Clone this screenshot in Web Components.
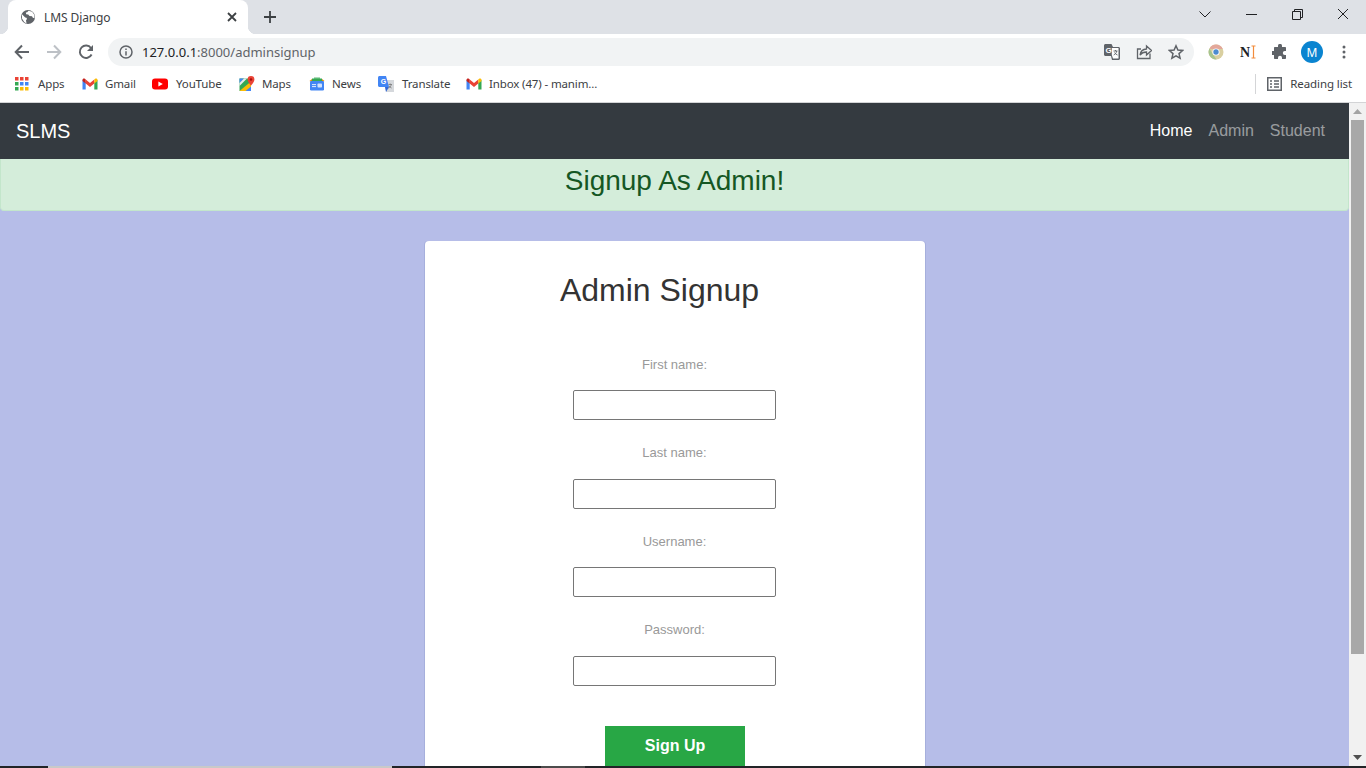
<!DOCTYPE html>
<html lang="en">
<head>
<meta charset="utf-8">
<title>LMS Django</title>
<style>
    html, body { margin: 0; height: 100%; overflow: hidden; background: #fff; }
    body { font-family: "Liberation Sans", Arial, sans-serif; }
    browser-window { height: 768px; }
</style>
</head>
<body>
<browser-window>
    <tab-strip slot="chrome" title-text="LMS Django"></tab-strip>
    <nav-toolbar slot="chrome" url-host="127.0.0.1" url-path=":8000/adminsignup"></nav-toolbar>
    <bookmarks-bar slot="chrome">
        <bookmark-item width="67" label="Apps"><svg width="14" height="14" viewBox="0 0 14 14">
            <rect x="0" y="0" width="3.5" height="3.5" fill="#ea4335"/><rect x="5" y="0" width="3.5" height="3.5" fill="#ea4335"/><rect x="10" y="0" width="3.5" height="3.5" fill="#ea4335"/>
            <rect x="0" y="5" width="3.5" height="3.5" fill="#34a853"/><rect x="5" y="5" width="3.5" height="3.5" fill="#4285f4"/><rect x="10" y="5" width="3.5" height="3.5" fill="#4285f4"/>
            <rect x="0" y="10" width="3.5" height="3.5" fill="#34a853"/><rect x="5" y="10" width="3.5" height="3.5" fill="#fbbc04"/><rect x="10" y="10" width="3.5" height="3.5" fill="#fbbc04"/></svg></bookmark-item>
        <bookmark-item width="70" label="Gmail"><svg width="16" height="16" viewBox="0 0 16 16"><path d="M.5 4v9.500h3.200V6.500z" fill="#4285f4"/><path d="M12.300 6.500v7h3.200V4z" fill="#34a853"/><path d="M3.700 3.500L8 7l4.300-3.500v4L8 11 3.700 7.500z" fill="#ea4335"/><path d="M12.300 3.500l.8-.7c1-.8 2.400-.2 2.400 1.100V5l-3.200 2.500z" fill="#fbbc04"/><path d="M3.700 3.500l-.8-.7C1.900 2 .5 2.600.5 3.900V5l3.200 2.500z" fill="#c5221f"/></svg></bookmark-item>
        <bookmark-item width="87" label="YouTube" text-x="24"><svg width="16" height="16" viewBox="0 0 16 16"><rect x="0" y="2.500" width="16" height="11" rx="3" fill="#f00"/><path d="M6.400 5.400v5.200L10.800 8z" fill="#fff"/></svg></bookmark-item>
        <bookmark-item width="70" label="Maps"><svg width="16" height="16" viewBox="0 0 16 16"><path d="M.5 2.500h11.500v12.500H.5z" fill="#34a853"/><path d="M.5 15L12 5.500V15z" fill="#fbbc04"/><path d="M6.500 15L12 10.500V15z" fill="#4285f4"/><path d="M.5 2.500h4.500L.5 7z" fill="#4285f4"/><path d="M.5 7L5 2.500h3L.5 10z" fill="#e8eaed"/><path d="M12 0a3.400 3.400 0 0 0-3.400 3.400C8.600 5.800 12 9.500 12 9.500s3.400-3.700 3.400-6.100A3.400 3.400 0 0 0 12 0z" fill="#ea4335"/><circle cx="12" cy="3.500" r="1.200" fill="#a50e0e"/></svg></bookmark-item>
        <bookmark-item width="69" label="News"><svg width="16" height="16" viewBox="0 0 16 16"><path d="M3 5V2.500h10V5z" fill="#34a853"/><path d="M5 3V1.500h6V3z" fill="#5bb974"/><path d="M.5 5l2.500-2v3zM15.500 5L13 3v3z" fill="#ea8600"/><rect x="1" y="5" width="14" height="9.500" rx="1.200" fill="#4285f4"/><rect x="3" y="8" width="4" height="1.100" fill="#d2e3fc"/><rect x="3" y="10" width="4" height="1.100" fill="#d2e3fc"/><rect x="8.500" y="7.500" width="4.500" height="4" rx=".8" fill="#d2e3fc"/></svg></bookmark-item>
        <bookmark-item width="88" label="Translate" text-x="24"><svg width="16" height="17" viewBox="0 0 16 17"><path d="M6 4h10v12H8z" fill="#d5d8dc"/><path d="M0 1.500C0 .7.7 0 1.500 0H8l3 11H1.500C.7 11 0 10.300 0 9.500z" fill="#4285f4"/><path d="M7 11l1 5 3-5z" fill="#3367d6"/><text x="2.800" y="8" font-family="Liberation Sans" font-weight="700" font-size="7" fill="#fff">G</text><path d="M10.500 8.500h3.500M12.200 7.500v1M13.300 8.500c-.4 2-1.600 3-3 3.600M11 9.800c.6 1 1.500 1.800 2.600 2.200" fill="none" stroke="#777" stroke-width=".8"/></svg></bookmark-item>
        <bookmark-item width="150" label="Inbox (47) - manim..."><svg width="16" height="16" viewBox="0 0 16 16"><path d="M.5 4v9.500h3.200V6.500z" fill="#4285f4"/><path d="M12.300 6.500v7h3.200V4z" fill="#34a853"/><path d="M3.700 3.500L8 7l4.300-3.500v4L8 11 3.700 7.500z" fill="#ea4335"/><path d="M12.300 3.500l.8-.7c1-.8 2.400-.2 2.400 1.100V5l-3.200 2.500z" fill="#fbbc04"/><path d="M3.700 3.500l-.8-.7C1.900 2 .5 2.600.5 3.900V5l3.200 2.500z" fill="#c5221f"/></svg></bookmark-item>
    </bookmarks-bar>

    <site-nav brand="SLMS">
        <nav-link active>Home</nav-link>
        <nav-link>Admin</nav-link>
        <nav-link>Student</nav-link>
    </site-nav>
    <alert-banner>Signup As Admin!</alert-banner>
    <signup-card heading="Admin Signup">
        <form-field label="First name:"></form-field>
        <form-field label="Last name:"></form-field>
        <form-field label="Username:"></form-field>
        <form-field label="Password:" type="password"></form-field>
        <submit-button>Sign Up</submit-button>
    </signup-card>
</browser-window>

<script>
// small helper, every element below uses it for its shadow root
function shadow(el, html) {
    const root = el.attachShadow({ mode: 'open' });
    root.innerHTML = html;
    return root;
}

const CHROME_FONT = `"Noto Sans", "Open Sans", sans-serif`;

class BrowserWindow extends HTMLElement {
    connectedCallback() {
        shadow(this, `
            <style>
                :host { display: flex; flex-direction: column; width: 1366px; overflow: hidden; }
                .chrome { flex: none; }
                .viewport { flex: 1; min-height: 0; display: flex; }
                .page { flex: 1; min-width: 0; overflow: hidden; background: #b6bde8; }
                .taskbar { flex: none; height: 2px; display: flex; background: #222427; }
                .taskbar i { display: block; }
                .taskbar .gap { width: 48px; }
                .taskbar .light { width: 344px; background: #c9c9c9; }
                .taskbar .mid { width: 149px; }
                .taskbar .grey { width: 44px; background: #4c4c4c; }
            </style>
            <div class="chrome"><slot name="chrome"></slot></div>
            <div class="viewport">
                <div class="page"><slot></slot></div>
                <page-scrollbar></page-scrollbar>
            </div>
            <div class="taskbar"><i class="gap"></i><i class="light"></i><i class="mid"></i><i class="grey"></i></div>
        `);
    }
}

class TabStrip extends HTMLElement {
    connectedCallback() {
        shadow(this, `
            <style>
                :host { display: flex; height: 34px; background: #dee1e6; font-family: ${CHROME_FONT}; }
                .tab { position: relative; margin-left: 8px; width: 240px; background: #fff; border-radius: 8px 8px 0 0; display: flex; align-items: center; padding: 0 0 0 13px; box-sizing: border-box; }
                .tab::before, .tab::after { content: ''; position: absolute; bottom: 0; width: 8px; height: 8px; }
                .tab::before { left: -8px; background: radial-gradient(circle at 0 0, transparent 8px, #fff 8.5px); }
                .tab::after { right: -8px; background: radial-gradient(circle at 100% 0, transparent 8px, #fff 8.5px); }
                .title { margin-left: 9px; flex: 1; font-size: 12px; color: #3c4043; letter-spacing: -.1px; }
                .close { margin-right: 11px; display: flex; }
                .new { margin-left: 16px; display: flex; align-items: center; }
                .spacer { flex: 1; }
                .ctl { width: 46px; display: flex; align-items: center; justify-content: center; height: 28px; }
            </style>
            <div class="tab">
                <svg width="14" height="14" viewBox="0 0 14 14"><circle cx="7" cy="7" r="7" fill="#5f6368"/><path d="M1 4.200L4.200 7.500l1.300.3.500 1.200-1 1.200.5 3.200L3.200 12 1 8.500zM7.500 .7L6.200 2.200 4.800 2.600 5.200 4.200l2 .3L8.500 6 11 6.200l1 1.800 1.600-.3-.4-3-2-3z" fill="#fff"/></svg>
                <span class="title">${this.getAttribute('title-text')}</span>
                <span class="close"><svg width="10" height="10" viewBox="0 0 10 10"><path d="M1 1l8 8M9 1L1 9" stroke="#3c4043" stroke-width="1.800"/></svg></span>
            </div>
            <span class="new"><svg width="12" height="12" viewBox="0 0 12 12"><path d="M6 0v12M0 6h12" stroke="#3c4043" stroke-width="1.800"/></svg></span>
            <span class="spacer"></span>
            <span class="ctl"><svg width="12" height="7" viewBox="0 0 12 7"><path d="M.5 .5L6 6l5.500-5.500" fill="none" stroke="#202124"/></svg></span>
            <span class="ctl"><svg width="11" height="1" viewBox="0 0 11 1"><path d="M0 .5h11" stroke="#202124"/></svg></span>
            <span class="ctl"><svg width="11" height="11" viewBox="0 0 11 11"><path d="M.5 2.500h8v8h-8zM2.500 2.500v-2h8v8h-2" fill="none" stroke="#202124"/></svg></span>
            <span class="ctl"><svg width="12" height="12" viewBox="0 0 12 12"><path d="M1 1l10 10M11 1L1 11" stroke="#202124"/></svg></span>
        `);
    }
}

class NavToolbar extends HTMLElement {
    connectedCallback() {
        shadow(this, `
            <style>
                :host { display: flex; align-items: center; height: 36px; background: #fff; font-family: ${CHROME_FONT}; }
                .btn { flex: none; width: 32px; height: 34px; display: flex; align-items: center; justify-content: center; }
                .nav { margin-left: 6px; display: flex; }
                .omni { flex: 1; margin-left: 6px; height: 28px; border-radius: 14px; background: #f1f3f4; display: flex; align-items: center; padding: 0 2px 0 11px; min-width: 0; }
                .url { margin-left: 9px; flex: 1; font-size: 13px; color: #5f6368; }
                .url b { font-weight: 400; color: #202124; }
                .omni .btn { height: 28px; }
                .ext { display: flex; margin: 0 6px 0 6px; }
            </style>
            <div class="nav">
                <span class="btn"><svg width="16" height="16" viewBox="0 0 16 16"><path d="M15 8H2M8 1.500L1.700 8 8 14.500" fill="none" stroke="#5f6368" stroke-width="2"/></svg></span>
                <span class="btn"><svg width="16" height="16" viewBox="0 0 16 16"><path d="M1 8h13M8 1.500L14.300 8 8 14.500" fill="none" stroke="#bdc1c6" stroke-width="2"/></svg></span>
                <span class="btn"><svg width="16" height="16" viewBox="0 0 16 16"><path d="M13.600 10.500A6.200 6.200 0 1 1 13 4" fill="none" stroke="#5f6368" stroke-width="1.900"/><path d="M15 1v6H9z" fill="#5f6368"/></svg></span>
            </div>
            <div class="omni">
                <svg width="14" height="14" viewBox="0 0 14 14"><circle cx="7" cy="7" r="6" fill="none" stroke="#5f6368" stroke-width="1.500"/><path d="M7 6.200V10.500M7 3.500v1.500" stroke="#5f6368" stroke-width="1.500"/></svg>
                <span class="url"><b>${this.getAttribute('url-host')}</b>${this.getAttribute('url-path')}</span>
                <span class="btn"><svg width="16" height="16" viewBox="0 0 16 16"><path d="M1.500 0h6L9 3h5.500c.8 0 1.500.7 1.500 1.500v10c0 .8-.7 1.500-1.500 1.500H8L7 12H1.500C.7 12 0 11.300 0 10.500v-9C0 .7.7 0 1.500 0z" fill="#5f6368"/><path d="M7.800 4h6.700v10.500H9L7.800 11z" fill="#fff"/><text x="1.500" y="9" font-family="Liberation Sans" font-weight="700" font-size="8" fill="#fff">G</text><path d="M9.500 7h4M11.500 6v1M12.700 7c-.3 2-1.400 3.200-3 4M10.500 8.500c.6 1.100 1.600 2 3 2.500" fill="none" stroke="#5f6368" stroke-width=".9"/></svg></span>
                <span class="btn"><svg width="16" height="16" viewBox="0 0 16 16"><path d="M14 9.500v5H1.500V5H5" fill="none" stroke="#5f6368" stroke-width="1.300"/><path d="M4 11c.5-3.500 3-5.800 6.500-6V2L15.500 6.500 10.500 11V8c-2.800 0-5 1-6.500 3z" fill="none" stroke="#5f6368" stroke-width="1.300"/></svg></span>
                <span class="btn"><svg width="16" height="16" viewBox="0 0 16 16"><path d="M8 1.800l1.900 4.300 4.700.4-3.600 3.100 1.100 4.600L8 11.800l-4.100 2.400L5 9.600 1.400 6.500l4.700-.4z" fill="none" stroke="#5f6368" stroke-width="1.500"/></svg></span>
            </div>
            <div class="ext">
                <span class="btn"><svg width="16" height="16" viewBox="0 0 16 16"><circle cx="8" cy="8" r="7.500" fill="#d9cfa0"/><path d="M8 .5A7.500 7.500 0 0 1 14.800 5H8z M1.500 4.500A7.500 7.500 0 0 1 8 .5V5H3z" fill="#e3a79a"/><path d="M1.500 4.500L5 10.500 8.500 15.500A7.500 7.500 0 0 1 1.500 4.500z" fill="#a6c48e"/><circle cx="8" cy="8" r="3.600" fill="#fff"/><circle cx="8" cy="8" r="2.700" fill="#4c8bd0"/></svg></span>
                <span class="btn"><svg width="16" height="16" viewBox="0 0 16 16"><text x="0" y="12.500" font-family="Liberation Serif" font-weight="700" font-size="14" fill="#202124">N</text><path d="M11.500 2h4M13.500 2v12M11.500 14h4" fill="none" stroke="#f28c3c" stroke-width="1.200"/></svg></span>
                <span class="btn"><svg width="16" height="16" viewBox="0 0 16 16"><path d="M6 1.800a2 2 0 0 1 4 0V3h3c.6 0 1 .4 1 1v3h-1.200a2 2 0 0 0 0 4H14v3c0 .6-.4 1-1 1h-3v-1.200a2 2 0 0 0-4 0V15H3c-.6 0-1-.4-1-1v-3H.8a2 2 0 0 1 0-4H2V4c0-.6.4-1 1-1h3z" fill="#5f6368"/></svg></span>
                <span class="btn"><user-avatar>M</user-avatar></span>
                <span class="btn"><svg width="4" height="14" viewBox="0 0 4 14"><circle cx="2" cy="2" r="1.500" fill="#5f6368"/><circle cx="2" cy="7" r="1.500" fill="#5f6368"/><circle cx="2" cy="12" r="1.500" fill="#5f6368"/></svg></span>
            </div>
        `);
    }
}

class UserAvatar extends HTMLElement {
    connectedCallback() {
        shadow(this, `
            <style>
                :host { display: flex; width: 22px; height: 22px; border-radius: 50%; background: #0a84d0; color: #fff; align-items: center; justify-content: center; font: 12px "Noto Sans", sans-serif; }
            </style>
            <slot></slot>
        `);
    }
}

class BookmarksBar extends HTMLElement {
    connectedCallback() {
        shadow(this, `
            <style>
                :host { display: flex; align-items: center; height: 33px; padding: 0 0 4px 15px; box-sizing: border-box; background: #fff; border-bottom: 1px solid #d3d4d6; font-family: ${CHROME_FONT}; }
                .spacer { flex: 1; }
                .reading { display: flex; align-items: center; border-left: 1px solid #d4d5d7; height: 20px; padding-left: 11px; margin-right: 14px; font-size: 11.500px; color: #3c4043; }
                .reading span { margin-left: 8px; letter-spacing: -.1px; white-space: nowrap; position: relative; top: -1px; }
            </style>
            <slot></slot>
            <span class="spacer"></span>
            <div class="reading">
                <svg width="15" height="14" viewBox="0 0 15 14"><path d="M.75.750h13.500v12.500H.75z" fill="none" stroke="#5f6368" stroke-width="1.500"/><path d="M3 4h2M7 4h5M3 7h2M7 7h5M3 10h2M7 10h5" stroke="#5f6368" stroke-width="1.300"/></svg>
                <span>Reading list</span>
            </div>
        `);
    }
}

class BookmarkItem extends HTMLElement {
    connectedCallback() {
        this.style.width = this.getAttribute('width') + 'px';
        const textX = this.getAttribute('text-x') || 23;
        shadow(this, `
            <style>
                :host { display: flex; align-items: center; flex: none; font-size: 11.500px; color: #3c4043; white-space: nowrap; }
                .icon { flex: none; width: ${textX}px; display: flex; }
                span { letter-spacing: -.13px; line-height: 14px; }
            </style>
            <div class="icon"><slot></slot></div>
            <span>${this.getAttribute('label')}</span>
        `);
    }
}

class PageScrollbar extends HTMLElement {
    connectedCallback() {
        shadow(this, `
            <style>
                :host { display: flex; flex-direction: column; flex: none; width: 17px; background: #f1f1f1; align-items: center; }
                .arrow { flex: none; height: 17px; display: flex; align-items: center; justify-content: center; }
                .thumb { flex: none; width: 13px; height: 534px; background: #a8a8a8; }
                .rest { flex: 1; }
            </style>
            <div class="arrow"><svg width="9" height="5" viewBox="0 0 9 5"><path d="M4.500 0L9 5H0z" fill="#a3a3a3"/></svg></div>
            <div class="thumb"></div>
            <div class="rest"></div>
            <div class="arrow"><svg width="9" height="5" viewBox="0 0 9 5"><path d="M0 0h9L4.500 5z" fill="#505050"/></svg></div>
        `);
    }
}

class SiteNav extends HTMLElement {
    connectedCallback() {
        shadow(this, `
            <style>
                :host { display: flex; align-items: center; justify-content: space-between; height: 56px; padding: 0 16px; box-sizing: border-box; background: #343a40; }
                .brand { font-size: 20px; color: #fff; }
                nav { display: flex; }
            </style>
            <span class="brand">${this.getAttribute('brand')}</span>
            <nav><slot></slot></nav>
        `);
    }
}

class NavLink extends HTMLElement {
    connectedCallback() {
        shadow(this, `
            <style>
                :host { display: block; padding: 0 8px; font-size: 16px; line-height: 24px; color: rgba(255, 255, 255, .5); }
                :host([active]) { color: #fff; }
            </style>
            <slot></slot>
        `);
    }
}

class AlertBanner extends HTMLElement {
    connectedCallback() {
        shadow(this, `
            <style>
                :host { display: block; height: 52px; box-sizing: border-box; padding-top: 4px; background: #d4edda; border: 1px solid #c3e6cb; border-top: 0; border-radius: 0 0 4px 4px; color: #155724; text-align: center; font-size: 28px; line-height: 36px; }
            </style>
            <slot></slot>
        `);
    }
}

class SignupCard extends HTMLElement {
    connectedCallback() {
        shadow(this, `
            <style>
                :host { display: block; width: 500px; margin: 30px auto 0; padding: 30px 0 40px; box-sizing: border-box; background: #fff; border-radius: 4px; box-shadow: -1px 0 0 rgba(60, 70, 140, .12), 1px 0 0 rgba(60, 70, 140, .12); }
                h1 { margin: 0 30px 0 0; font-size: 32px; line-height: 38px; font-weight: 400; color: #333; text-align: center; }
                .fields { margin-top: 45px; display: flex; flex-direction: column; align-items: center; }
            </style>
            <h1>${this.getAttribute('heading')}</h1>
            <div class="fields"><slot></slot></div>
        `);
    }
}

class FormField extends HTMLElement {
    connectedCallback() {
        shadow(this, `
            <style>
                :host { display: flex; flex-direction: column; align-items: center; height: 88.500px; }
                label { font-size: 13px; line-height: 21px; color: #999; margin: -.25px 0 15.250px; }
                input { display: block; width: 203px; height: 30px; box-sizing: border-box; margin: 0; padding: 1px 2px; border: 1px solid #767676; border-radius: 2px; background: #fff; }
            </style>
            <label for="f">${this.getAttribute('label')}</label>
            <input id="f" type="${this.getAttribute('type') || 'text'}">
        `);
    }
}

class SubmitButton extends HTMLElement {
    connectedCallback() {
        shadow(this, `
            <style>
                :host { display: block; margin-top: 18px; }
                button { display: block; width: 140px; height: 40px; border: 0; padding: 0 0 0 1px; background: #28a745; color: #fff; font: 700 16px "Liberation Sans", Arial, sans-serif; }
            </style>
            <button type="submit"><slot></slot></button>
        `);
    }
}

customElements.define('browser-window', BrowserWindow);
customElements.define('tab-strip', TabStrip);
customElements.define('nav-toolbar', NavToolbar);
customElements.define('user-avatar', UserAvatar);
customElements.define('bookmarks-bar', BookmarksBar);
customElements.define('bookmark-item', BookmarkItem);
customElements.define('page-scrollbar', PageScrollbar);
customElements.define('site-nav', SiteNav);
customElements.define('nav-link', NavLink);
customElements.define('alert-banner', AlertBanner);
customElements.define('signup-card', SignupCard);
customElements.define('form-field', FormField);
customElements.define('submit-button', SubmitButton);
</script>
</body>
</html>
